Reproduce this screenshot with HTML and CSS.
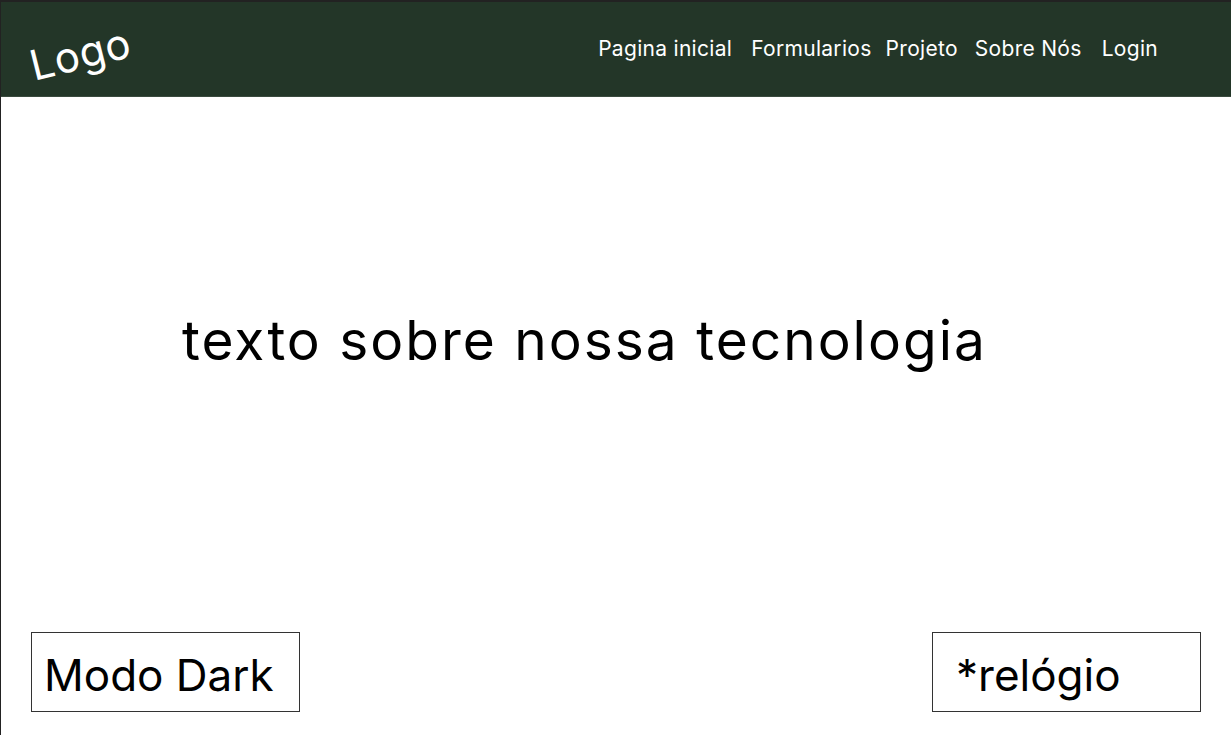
FILE: index.html
```html
<!DOCTYPE html>
<html lang="pt">
<head>
<meta charset="utf-8">
<title>Tecnologia</title>
<link rel="stylesheet" href="styles.css">
</head>
<body>
<div class="page">
  <header class="topbar">
    <div class="logo">Logo</div>
    <nav class="nav">
      <a href="#">Pagina inicial</a>
      <a href="#">Formularios</a>
      <a href="#">Projeto</a>
      <a href="#">Sobre Nós</a>
      <a href="#">Login</a>
    </nav>
  </header>
  <main class="content">
    <h1 class="headline">texto sobre nossa tecnologia</h1>
    <div class="bottom">
      <div class="box box-dark">Modo Dark</div>
      <div class="box box-clock">*relógio</div>
    </div>
  </main>
</div>
</body>
</html>
```

FILE: styles.css
```css
html, body {
  margin: 0;
  padding: 0;
  background: #fff;
}
body {
  font-family: Inter, "Noto Sans", sans-serif;
  color: #000;
}
.page {
  box-sizing: border-box;
  width: 1231px;
  height: 735px;
  border-top: 2px solid #222;
  border-left: 1px solid #222;
  display: flex;
  flex-direction: column;
}
.topbar {
  height: 95px;
  background: #233628;
  border-bottom: 1px solid #3a4a3e;
  display: flex;
  align-items: center;
  justify-content: space-between;
  box-sizing: border-box;
}
.logo {
  color: #fff;
  font-size: 42px;
  margin-left: 28px;
  transform: rotate(-14deg);
  margin-top: 8px;
  letter-spacing: 0.6px;
}
.nav {
  display: flex;
  margin-right: 73px;
  margin-top: -2px;
}
.nav a {
  color: #fff;
  text-decoration: none;
  font-size: 21px;
  letter-spacing: 0.3px;
  margin-left: 17px;
}
.nav a:nth-child(2) { margin-left: 19px; }
.nav a:nth-child(3) { margin-left: 14px; }
.nav a:nth-child(4) { margin-left: 17px; }
.nav a:nth-child(5) { margin-left: 20px; }
.content {
  flex: 1;
  display: flex;
  flex-direction: column;
}
.headline {
  font-weight: 400;
  font-size: 55px;
  letter-spacing: 2px;
  margin: 216px 0 0 181px;
  line-height: 1;
}
.bottom {
  margin-top: auto;
  display: flex;
  justify-content: space-between;
  padding: 0 30px 23px 30px;
}
.box {
  box-sizing: border-box;
  width: 269px;
  height: 80px;
  border: 1px solid #333;
  font-size: 44px;
  display: flex;
  align-items: center;
  padding-top: 6px;
}
.box-dark {
  padding-left: 12px;
}
.box-clock {
  padding-left: 23px;
}
```
